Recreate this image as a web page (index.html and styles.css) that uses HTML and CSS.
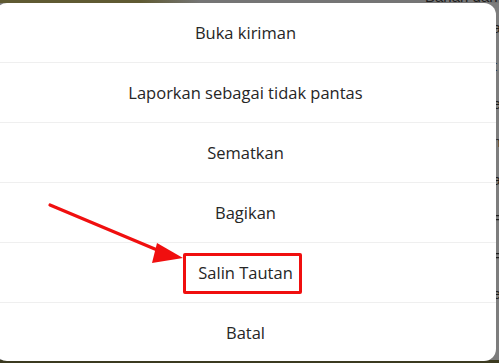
FILE: index.html
```html
<!DOCTYPE html>
<html lang="id">
<head>
<meta charset="utf-8">
<link rel="stylesheet" href="styles.css">
</head>
<body>
<div class="screen">
  <div class="backdrop">
    <div class="bd-top">Bahan dan cara</div>
    <div class="bd-side">
      <span>a</span>
      <span>t</span>
      <span>e</span>
      <span>n</span>
      <span>a</span>
      <span>=</span>
      <span>=</span>
      <span>e</span>
    </div>
  </div>
  <div class="modal">
    <div class="item">Buka kiriman</div>
    <div class="item">Laporkan sebagai tidak pantas</div>
    <div class="item">Sematkan</div>
    <div class="item">Bagikan</div>
    <div class="item">Salin Tautan</div>
    <div class="item last">Batal</div>
  </div>
  <div class="highlight"></div>
  <svg class="arrow" width="499" height="363" viewBox="0 0 499 363">
    <line x1="50" y1="205" x2="162" y2="252" stroke="#f00f0f" stroke-width="3.2" stroke-linecap="round"/>
    <polygon points="183,258 157,243 152,263" fill="#f00f0f"/>
  </svg>
</div>
</body>
</html>
```
FILE: styles.css
```css
html, body {
  margin: 0;
  padding: 0;
}
body {
  width: 499px;
  height: 363px;
  overflow: hidden;
  background: #7a7a7a;
  font-family: "Open Sans", "Noto Sans", sans-serif;
}
.screen {
  position: relative;
  width: 499px;
  height: 363px;
  overflow: hidden;
  padding-top: 3px;
  box-sizing: border-box;
  background:
    linear-gradient(to right, #5f5a32 0, #5f5a32 140px, #757575 200px, #757575 100%) top / 100% 3px no-repeat,
    linear-gradient(#3b3a20, #3b3a20) bottom / 100% 3px no-repeat,
    #7d7d7d;
}
.backdrop {
  position: absolute;
  left: 0;
  top: 0;
  width: 499px;
  height: 363px;
}
.bd-top {
  position: absolute;
  left: 425px;
  top: -12px;
  font-family: "Liberation Sans", sans-serif;
  font-size: 15px;
  color: #1e1e1e;
  white-space: nowrap;
}
.bd-side {
  position: absolute;
  left: 493px;
  top: 20px;
  display: flex;
  flex-direction: column;
  gap: 22px;
  font-family: "Liberation Sans", sans-serif;
  font-size: 14px;
  line-height: 16px;
  color: #1e1e1e;
}
.modal {
  position: relative;
  margin-left: -5px;
  width: 501px;
  background: #fff;
  border-radius: 12px;
  overflow: hidden;
}
.item {
  height: 59px;
  border-bottom: 1px solid #efefef;
  display: flex;
  align-items: center;
  justify-content: center;
  font-size: 16.5px;
  color: #262626;
}
.item.last {
  height: 58px;
  border-bottom: none;
}
.highlight {
  position: absolute;
  left: 183px;
  top: 253px;
  width: 113px;
  height: 35px;
  border: 3px solid #f00f0f;
  border-radius: 2px;
}
.arrow {
  position: absolute;
  left: 0;
  top: 0;
}
```
